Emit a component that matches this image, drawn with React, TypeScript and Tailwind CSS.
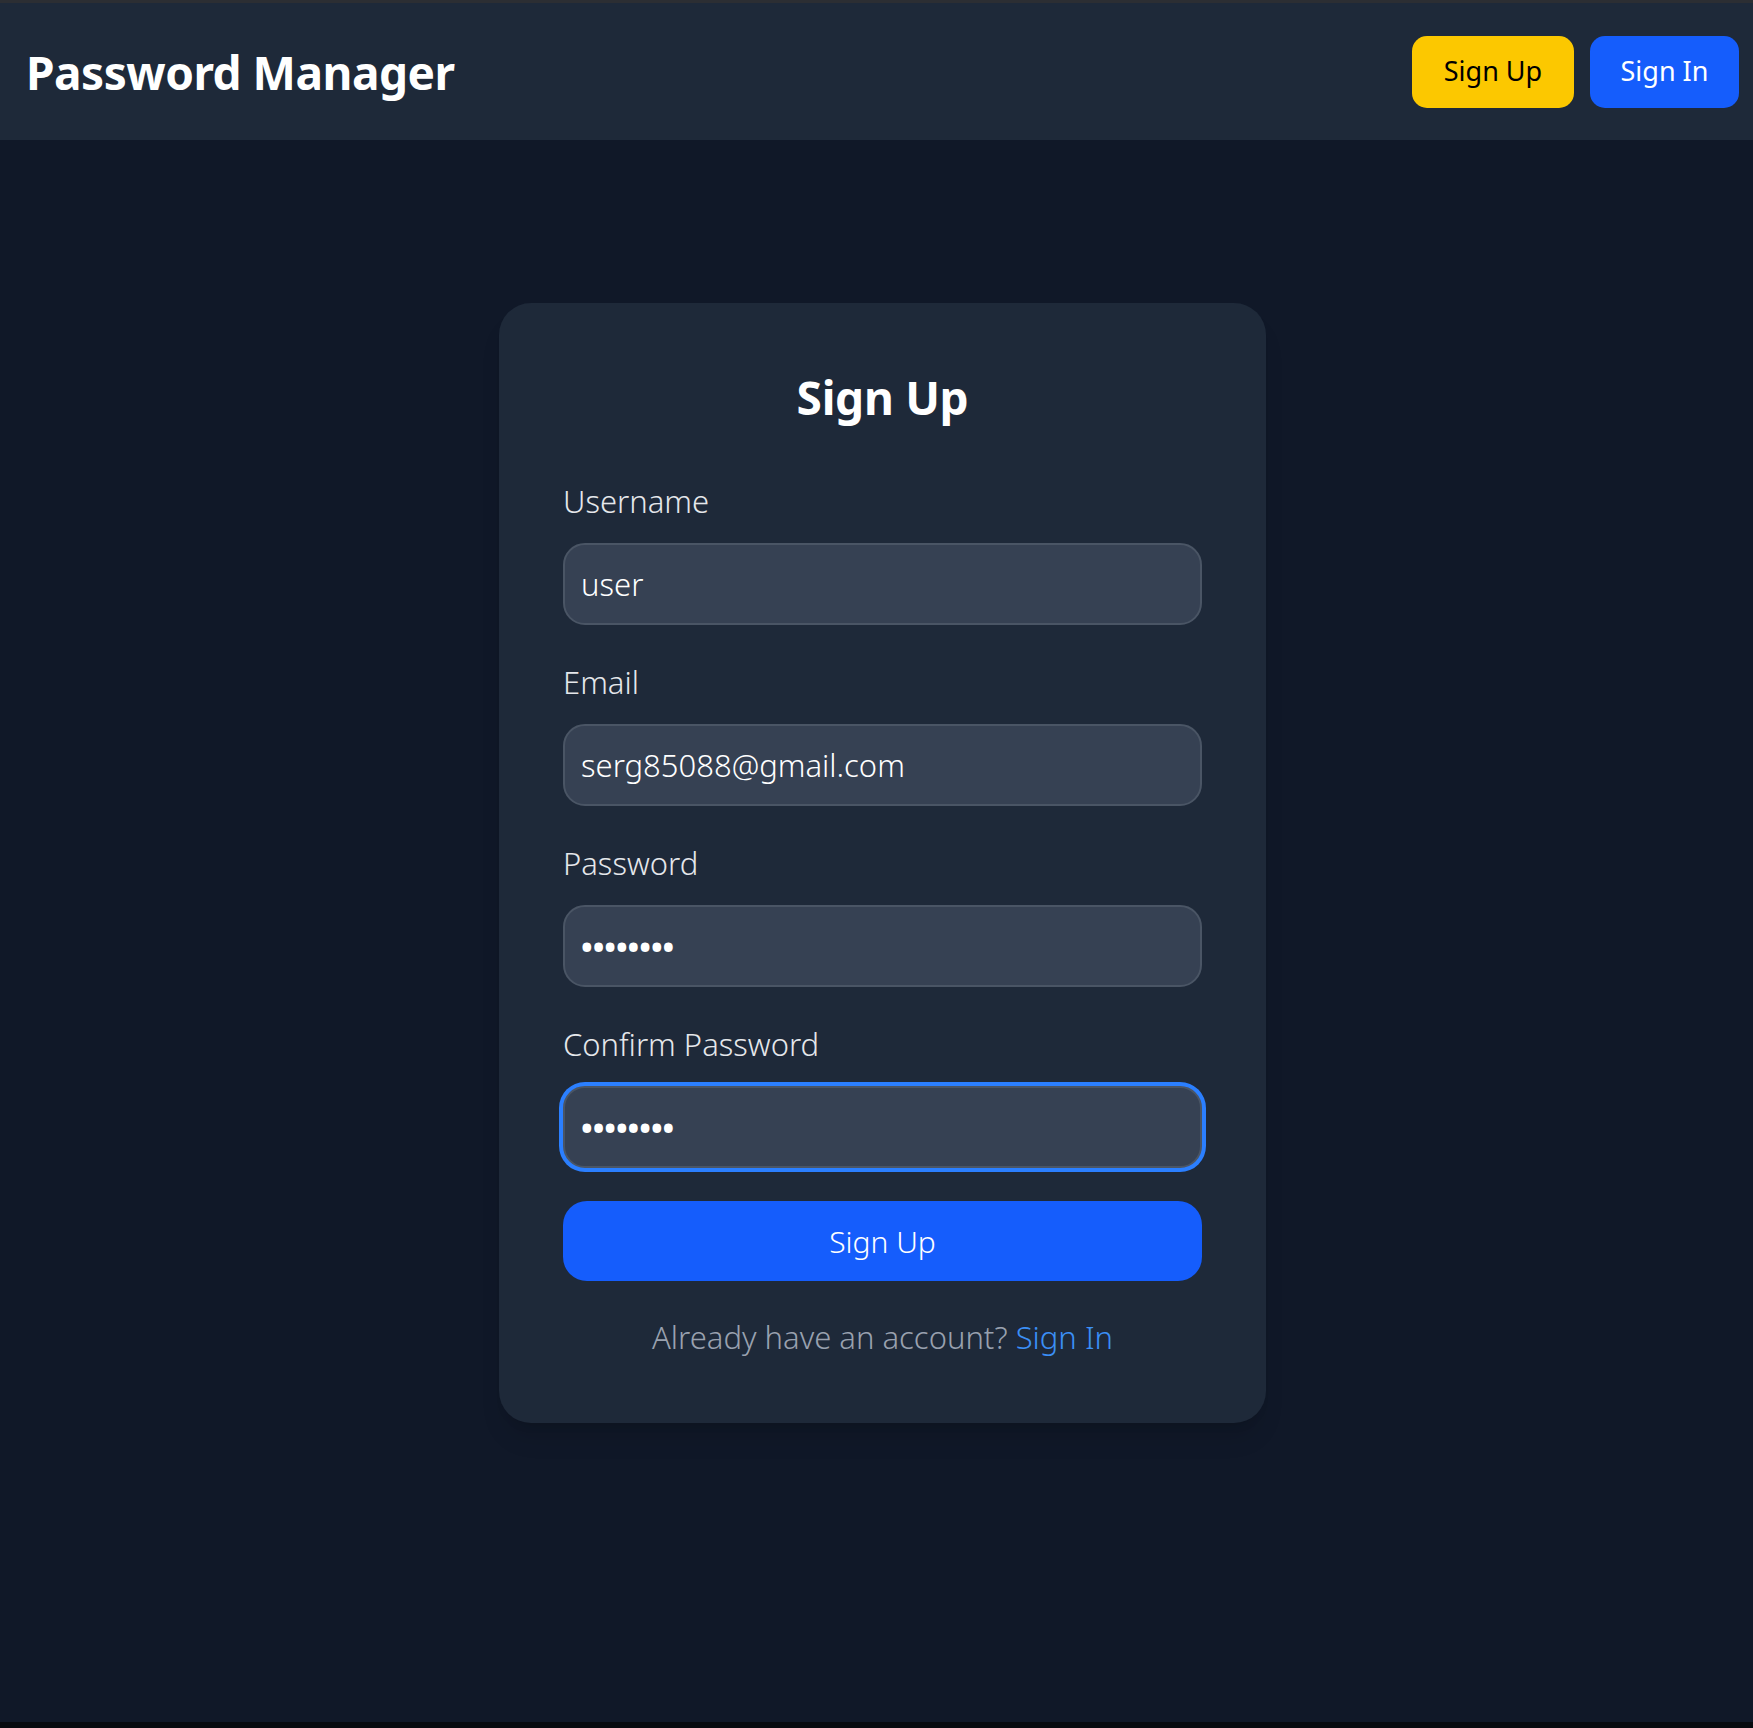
import React from "react";

const font = { fontFamily: '"Noto Sans", "Open Sans", sans-serif' };

function Field({ label, type, value, focused }: { label: string; type: string; value: string; focused?: boolean }) {
  const isPassword = type === "password";
  return (
    <div className="flex flex-col">
      <label className="text-[31px] leading-[44px] mb-[20px] text-gray-200 font-light">{label}</label>
      <input
        readOnly
        type={type}
        defaultValue={value}
        className={`h-[82px] w-full rounded-[22px] border-2 border-[#4a5565] bg-[#364153] px-[16px] text-[31px] text-white outline-none ${
          isPassword ? "font-bold" : "font-light"
        } ${focused ? "ring-4 ring-[#2b7fff]" : ""}`}
        style={font}
      />
    </div>
  );
}

export default function App() {
  return (
    <div className="min-h-[1728px] flex flex-col bg-[#101828] border-t-[3px] border-t-[#2c2e33] border-b-[6px] border-b-[#070a0f]" style={font}>
      <header className="h-[137px] shrink-0 bg-[#1e2939] flex items-center justify-between pl-[26px] pr-[14px]">
        <h1 className="text-[46px] font-bold text-white leading-none tracking-[-0.5px]">Password Manager</h1>
        <div className="flex items-center gap-[16px]">
          <button className="w-[162px] h-[72px] rounded-[15px] bg-[#fcc800] text-black text-[27px]">Sign Up</button>
          <button className="w-[149px] h-[72px] rounded-[15px] bg-[#155dfc] text-white text-[27px]">Sign In</button>
        </div>
      </header>

      <main className="flex-1 flex justify-center pt-[163px] pl-[12px]">
        <div className="w-[767px] h-fit rounded-[32px] bg-[#1e2939] p-[64px] shadow-xl">
          <h2 className="text-[46px] leading-[60px] font-bold text-white text-center mb-[52px] tracking-[-0.3px]">Sign Up</h2>
          <div className="flex flex-col gap-[35px]">
            <Field label="Username" type="text" value="user" />
            <Field label="Email" type="email" value="serg85088@gmail.com" />
            <Field label="Password" type="password" value="12345678" />
            <Field label="Confirm Password" type="password" value="12345678" focused />
          </div>
          <button className="mt-[33px] w-full h-[80px] rounded-[24px] bg-[#155dfc] text-white text-[30px] font-light">Sign Up</button>
          <p className="mt-[34px] text-center text-[31px] leading-[44px] text-[#99a1af] font-light">
            Already have an account? <a className="text-[#3b8ff6]">Sign In</a>
          </p>
        </div>
      </main>
    </div>
  );
}
